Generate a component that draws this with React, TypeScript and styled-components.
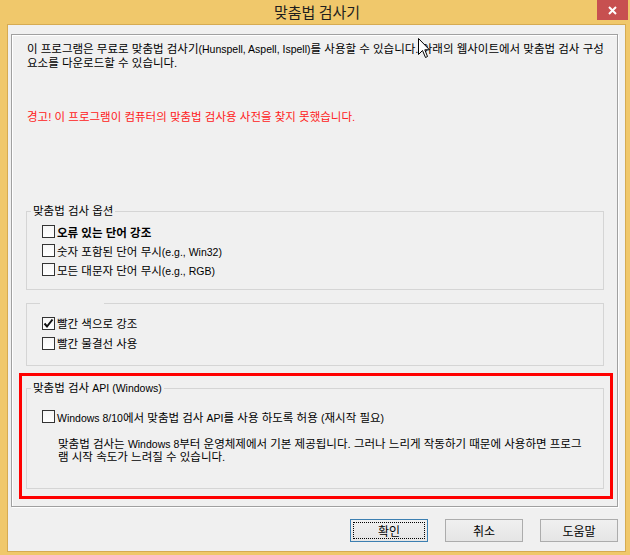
import React from "react";
import styled, { createGlobalStyle } from "styled-components";

const GlobalStyle = createGlobalStyle`
  html, body { margin: 0; padding: 0; }
  body {
    font-family: "Liberation Sans", "Noto Sans CJK KR", sans-serif;
    font-size: 11.5px;
    color: #000;
  }
`;

const Window = styled.div`
  position: relative;
  width: 630px;
  height: 555px;
  box-sizing: border-box;
  background: #f0c86b;
  padding: 0 4px 3px 7px;
  display: flex;
  flex-direction: column;
  overflow: hidden;
`;

const TitleBar = styled.div`
  height: 24px;
  display: grid;
  grid-template-columns: 1fr auto 1fr;
  align-items: start;
`;

const TitleText = styled.div`
  grid-column: 2;
  font-family: "Noto Sans CJK KR", sans-serif;
  font-size: 15px;
  line-height: 24px;
  color: #1e1e1e;
  margin-left: 1px;
`;

const CloseButton = styled.div`
  grid-column: 3;
  justify-self: end;
  width: 31px;
  height: 20px;
  margin-right: -2px;
  background: #c75050;
  color: #fff;
  display: flex;
  align-items: center;
  justify-content: center;
`;

const Client = styled.div`
  flex: 1;
  background: #f0f0f0;
  border: 1px solid #d6ab52;
  display: flex;
  flex-direction: column;
  padding: 9px 0 0 3px;
`;

const Panel = styled.div`
  width: 607px;
  height: 473px;
  box-sizing: border-box;
  border: 1px solid #a0a0a0;
  box-shadow: 1px 1px 0 #fff, inset 1px 1px 0 #fff;
  padding: 0 13px 0 14px;
  display: flex;
  flex-direction: column;
`;

const Paragraph = styled.p<{ $top: number; $color?: string }>`
  margin: ${(p) => p.$top}px 0 0 1px;
  line-height: 14px;
  color: ${(p) => p.$color ?? "#000"};
  white-space: nowrap;
`;

const Latin = styled.span`
  font-size: 10.5px;
`;

const Group = styled.div<{ $top: number; $bottom: number }>`
  position: relative;
  margin-top: ${(p) => p.$top}px;
  border: 1px solid #d5d5d5;
  padding-bottom: ${(p) => p.$bottom}px;
  width: 578px;
  box-sizing: border-box;
`;

const GroupTitle = styled.div<{ $indent?: number; $gap?: number }>`
  margin: -8px 0 0 ${(p) => p.$indent ?? 4}px;
  padding: 0 2px;
  background: #f0f0f0;
  width: fit-content;
  line-height: 14px;
  min-height: 14px;
  min-width: ${(p) => p.$gap ?? 0}px;
`;

const Rows = styled.div<{ $top: number; $h: number }>`
  margin-top: ${(p) => p.$top}px;
  padding-left: 15px;
  display: flex;
  flex-direction: column;
  & > * { height: ${(p) => p.$h}px; }
`;

const Row = styled.label<{ $bold?: boolean }>`
  display: flex;
  align-items: center;
  gap: 2px;
  font-weight: ${(p) => (p.$bold ? 700 : 400)};
  white-space: pre;
`;

const Box = styled.span`
  width: 13px;
  height: 13px;
  box-sizing: border-box;
  border: 1px solid #333;
  background: linear-gradient(#f6f6f6, #fff);
  display: flex;
  align-items: center;
  justify-content: center;
  flex: none;
`;

const Label = styled.span``;

const Description = styled.p`
  margin: 12px 0 0 31px;
  line-height: 13px;
  white-space: nowrap;
`;

const Highlight = styled.div`
  position: absolute;
  left: -8px;
  right: -10px;
  top: -16px;
  bottom: -11px;
  border: 3px solid #ff0000;
  pointer-events: none;
`;

const ButtonRow = styled.div`
  margin-top: 12px;
  display: flex;
  justify-content: flex-end;
  gap: 17px;
  padding-right: 7px;
`;

const Button = styled.div<{ $default?: boolean }>`
  position: relative;
  width: 78px;
  height: 23px;
  box-sizing: border-box;
  border: 1px solid ${(p) => (p.$default ? "#3c7fb1" : "#acacac")};
  background: linear-gradient(#f0f0f0, #e5e5e5);
  display: flex;
  align-items: center;
  justify-content: center;
  font-family: "Noto Sans CJK KR", sans-serif;
  font-size: 12px;
  &::after {
    content: "";
    display: ${(p) => (p.$default ? "block" : "none")};
    position: absolute;
    inset: 2px;
    border: 1px dotted #000;
  }
`;

const Cursor = styled.svg`
  position: absolute;
  left: 418px;
  top: 38px;
`;

function Check({ checked }: { checked?: boolean }) {
  return (
    <Box>
      {checked && (
        <svg width="11" height="11" viewBox="0 0 11 11">
          <path d="M1.5 5.5 L4 8.5 L9.5 1.5" fill="none" stroke="#111" strokeWidth="2" />
        </svg>
      )}
    </Box>
  );
}

export default function App() {
  return (
    <>
      <GlobalStyle />
      <Window>
        <TitleBar>
          <TitleText>맞춤법 검사기</TitleText>
          <CloseButton>
            <svg width="9" height="9" viewBox="0 0 9 9">
              <path d="M1 1 L8 8 M8 1 L1 8" stroke="#fff" strokeWidth="2" />
            </svg>
          </CloseButton>
        </TitleBar>
        <Client>
          <Panel>
            <Paragraph $top={7}>
              이 프로그램은 무료로 맞춤법 검사기<Latin>(Hunspell, Aspell, Ispell)</Latin>를 사용할 수 있습니다. 아래의 웹사이트에서 맞춤법 검사 구성
              <br />
              요소를 다운로드할 수 있습니다.
            </Paragraph>
            <Paragraph $top={40} $color="#ff2020">
              경고! 이 프로그램이 컴퓨터의 맞춤법 검사용 사전을 찾지 못했습니다.
            </Paragraph>

            <Group $top={87} $bottom={10}>
              <GroupTitle>맞춤법 검사 옵션</GroupTitle>
              <Rows $top={4} $h={19}>
                <Row $bold>
                  <Check />
                  <Label>오류 있는 단어 강조</Label>
                </Row>
                <Row>
                  <Check />
                  <Label>
                    숫자 포함된 단어 무시<Latin>(e.g., Win32)</Latin>
                  </Label>
                </Row>
                <Row>
                  <Check />
                  <Label>
                    모든 대문자 단어 무시<Latin>(e.g., RGB)</Latin>
                  </Label>
                </Row>
              </Rows>
            </Group>

            <Group $top={13} $bottom={12}>
              <GroupTitle $indent={13} $gap={60}>&nbsp;</GroupTitle>
              <Rows $top={3} $h={20}>
                <Row>
                  <Check checked />
                  <Label>빨간 색으로 강조</Label>
                </Row>
                <Row>
                  <Check />
                  <Label>빨간 물결선 사용</Label>
                </Row>
              </Rows>
            </Group>

            <Group $top={22} $bottom={24}>
              <Highlight />
              <GroupTitle>
                맞춤법 검사 <Latin>API (Windows)</Latin>
              </GroupTitle>
              <Rows $top={12} $h={19}>
                <Row>
                  <Check />
                  <Label>
                    <Latin>Windows 8/10</Latin>에서 맞춤법 검사 <Latin>API</Latin>를 사용 하도록 허용 <Latin>(</Latin>재시작 필요<Latin>)</Latin>
                  </Label>
                </Row>
              </Rows>
              <Description>
                맞춤법 검사는 <Latin>Windows 8</Latin>부터 운영체제에서 기본 제공됩니다. 그러나 느리게 작동하기 때문에 사용하면 프로그
                <br />
                램 시작 속도가 느려질 수 있습니다.
              </Description>
            </Group>
          </Panel>
          <ButtonRow>
            <Button $default>확인</Button>
            <Button>취소</Button>
            <Button>도움말</Button>
          </ButtonRow>
        </Client>
        <Cursor width="13" height="21" viewBox="0 0 13 21">
          <path d="M0.5 0.5 L0.5 16.5 L4.5 12.5 L7.5 19.5 L9.5 18.5 L6.8 11.8 L11.5 11.8 Z" fill="#fff" stroke="#000" strokeWidth="1" />
        </Cursor>
      </Window>
    </>
  );
}
